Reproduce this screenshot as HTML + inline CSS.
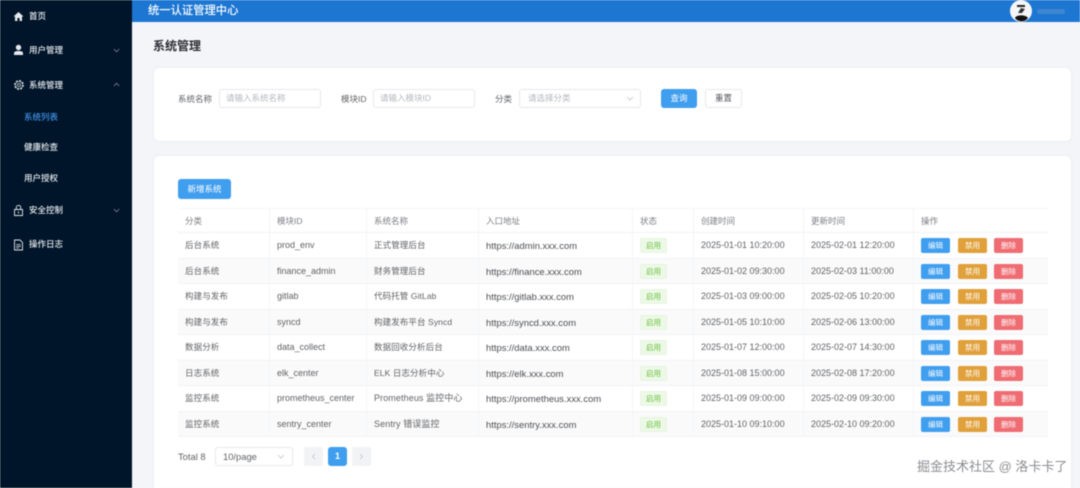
<!DOCTYPE html>
<html lang="zh">
<head>
<meta charset="utf-8">
<title>系统管理</title>
<style>
*{box-sizing:border-box}
html,body{margin:0;padding:0}
body{width:1080px;height:488px;overflow:hidden;background:#f3f5f8;font-family:"Liberation Sans","Noto Sans CJK SC",sans-serif;color:#606266;position:relative;font-size:8.5px}
#root{position:absolute;left:0;top:0;width:1080px;height:488px;overflow:hidden;filter:blur(.4px)}
.a{position:absolute;white-space:nowrap}
.side{position:absolute;left:0;top:0;width:132px;height:488px;background:#001529}
.m{position:absolute;color:#e6e9ee;font-size:8.5px;line-height:12px;white-space:nowrap;font-weight:500}
.side svg{position:absolute}
.top{position:absolute;left:132px;top:0;width:948px;height:22px;background:#1c76d2}
.card{position:absolute;left:153px;width:919px;background:#fff;border:1px solid #eceef2;border-radius:6px}
.inp{position:absolute;background:#fff;border:1px solid #e6e8ec;border-radius:3px;height:19px;line-height:17px;padding-left:6px;color:#b4b8bf;font-size:8.5px}
.btn{position:absolute;border-radius:3px;text-align:center;color:#fff;font-size:8.5px}
.r{position:absolute;left:178px;width:870px;border-bottom:1px solid #f2f3f6}
.r.s{background:#fafafa}
.c{position:absolute;top:0;white-space:nowrap;color:#606266;font-size:9px;line-height:25px}
.c.z{font-size:8.5px;letter-spacing:.1px}
.c.h{font-size:8.5px;color:#7b7e84;line-height:24px}
.c.u{color:#4a4d52;font-size:9.4px;letter-spacing:.02px}
.tag{position:absolute;left:462px;top:5px;width:27px;height:15px;background:#eef8e8;border:1px solid #e7f5df;border-radius:2px;color:#67c23a;font-size:7.5px;line-height:13px;text-align:center}
.b{position:absolute;top:5px;width:29px;height:15px;border-radius:2px;color:#fff;font-size:7.5px;line-height:15px;text-align:center}
.b1{left:743px;background:#409eef}.b2{left:780px;background:#e0a03a}.b3{left:816px;background:#ee6c72}
.v{position:absolute;top:208px;width:1px;height:229px;background:#f4f5f7}
</style>
</head>
<body>
<div id="root">
<div class="side">
  <svg style="left:13px;top:11px" width="11" height="11" viewBox="0 0 11 11"><path d="M5.500 1 10.500 5.500 9 5.500 9 10 6.600 10 6.600 7 4.400 7 4.400 10 2 10 2 5.500 .5 5.500Z" fill="#e6e9ee"/></svg>
  <div class="m" style="left:29px;top:10px">首页</div>
  <svg style="left:13px;top:44px" width="11" height="12" viewBox="0 0 11 12"><circle cx="5.500" cy="3.500" r="2.700" fill="#e6e9ee"/><path d="M1 11V9.200C1 7.600 3 7 5.500 7S10 7.600 10 9.200V11Z" fill="#e6e9ee"/></svg>
  <div class="m" style="left:29px;top:44px">用户管理</div>
  <svg style="left:113px;top:48px" width="7" height="5" viewBox="0 0 7 5"><path d="M.8 1 3.500 3.800 6.200 1" fill="none" stroke="#7d8794" stroke-width=".8"/></svg>
  <svg style="left:13px;top:79px" width="12" height="12" viewBox="0 0 12 12"><circle cx="6" cy="6" r="4.200" fill="none" stroke="#d5d9de" stroke-width="1.500" stroke-dasharray="1.900 1.400"/><circle cx="6" cy="6" r="3.500" fill="none" stroke="#d5d9de" stroke-width=".6"/><circle cx="6" cy="6" r="1.500" fill="none" stroke="#d5d9de" stroke-width=".8"/></svg>
  <div class="m" style="left:29px;top:79px">系统管理</div>
  <svg style="left:113px;top:82px" width="7" height="5" viewBox="0 0 7 5"><path d="M.8 4 3.500 1.200 6.200 4" fill="none" stroke="#7d8794" stroke-width=".8"/></svg>
  <div class="m" style="left:24px;top:111px;color:#3f8fe6">系统列表</div>
  <div class="m" style="left:24px;top:141px">健康检查</div>
  <div class="m" style="left:24px;top:172px">用户授权</div>
  <svg style="left:13px;top:204px" width="11" height="13" viewBox="0 0 11 13"><path d="M1.500 5.500H9.500V11.500H1.500Z" fill="none" stroke="#e0e3e8" stroke-width=".9"/><path d="M3.300 5.500V3.400C3.300 .8 7.700 .8 7.700 3.400V5.500" fill="none" stroke="#e0e3e8" stroke-width=".9"/><path d="M5.500 7.500V9.500" stroke="#e0e3e8" stroke-width=".9"/></svg>
  <div class="m" style="left:29px;top:204px">安全控制</div>
  <svg style="left:113px;top:208px" width="7" height="5" viewBox="0 0 7 5"><path d="M.8 1 3.500 3.800 6.200 1" fill="none" stroke="#7d8794" stroke-width=".8"/></svg>
  <svg style="left:13px;top:239px" width="11" height="12" viewBox="0 0 11 12"><path d="M1.500 1H7L9.500 3.500V11H1.500Z" fill="none" stroke="#e0e3e8" stroke-width=".9"/><path d="M3.200 5.500H7.800M3.200 7.300H7.800M3.200 9H6" stroke="#e0e3e8" stroke-width=".8"/></svg>
  <div class="m" style="left:29px;top:238px">操作日志</div>
</div>

<div class="top">
  <div class="a" style="left:16px;top:3px;color:#fff;font-size:11.300px;line-height:16px;font-weight:500">统一认证管理中心</div>
  <svg style="position:absolute;left:878px;top:0" width="22" height="22" viewBox="0 0 22 22">
    <circle cx="11" cy="11" r="11" fill="#f4f6f8"/>
    <path d="M5 18C6 14.500 16 14.500 18 18C15 22.500 8 22.500 5 18Z" fill="#111"/>
    <path d="M8 13 11 8 15 9 12 13Z" fill="#333"/>
    <path d="M7 5 15 5 15 7 7 7Z" fill="#222"/>
  </svg>
  <div class="a" style="left:905px;top:9px;width:28px;height:5px;background:#3f86cf;border-radius:2px"></div>
</div>

<div class="a" style="left:153px;top:37px;color:#2a2d33;font-size:12px;line-height:18px;font-weight:700">系统管理</div>

<div class="card" style="top:67px;height:75px"></div>
<div class="a" style="left:178px;top:93px;line-height:12px">系统名称</div>
<div class="inp" style="left:219px;top:89px;width:102px">请输入系统名称</div>
<div class="a" style="left:341px;top:93px;line-height:12px">模块ID</div>
<div class="inp" style="left:373px;top:89px;width:102px">请输入模块ID</div>
<div class="a" style="left:495px;top:93px;line-height:12px">分类</div>
<div class="inp" style="left:519px;top:89px;width:122px;padding-left:8px">请选择分类
  <svg style="position:absolute;left:106px;top:6px" width="8" height="5" viewBox="0 0 8 5"><path d="M1 1 4 4 7 1" fill="none" stroke="#c0c4cc" stroke-width=".8"/></svg>
</div>
<div class="btn" style="left:661px;top:89px;width:36px;height:19px;line-height:19px;background:#409eef">查询</div>
<div class="btn" style="left:705px;top:89px;width:37px;height:19px;line-height:17px;background:#fff;border:1px solid #e6e8ec;color:#55585e">重置</div>

<div class="card" style="top:155px;height:345px"></div>
<div class="btn" style="left:178px;top:179px;width:53px;height:20px;line-height:20px;background:#409eef">新增系统</div>

<div class="r" style="top:208px;height:25px;border-top:1px solid #f5f6f8">
  <div class="c h" style="left:7px">分类</div><div class="c h" style="left:99px">模块ID</div><div class="c h" style="left:196px">系统名称</div><div class="c h" style="left:308px">入口地址</div><div class="c h" style="left:462px">状态</div><div class="c h" style="left:523px">创建时间</div><div class="c h" style="left:633px">更新时间</div><div class="c h" style="left:743px">操作</div>
</div>

<div class="r" style="top:233px;height:26px">
  <div class="c z" style="left:7px">后台系统</div><div class="c" style="left:99px">prod_env</div><div class="c z" style="left:196px">正式管理后台</div><div class="c u" style="left:308px">https://admin.xxx.com</div><div class="tag">启用</div><div class="c" style="left:523px">2025-01-01 10:20:00</div><div class="c" style="left:633px">2025-02-01 12:20:00</div><div class="b b1">编辑</div><div class="b b2">禁用</div><div class="b b3">删除</div>
</div>
<div class="r s" style="top:259px;height:25px">
  <div class="c z" style="left:7px">后台系统</div><div class="c" style="left:99px">finance_admin</div><div class="c z" style="left:196px">财务管理后台</div><div class="c u" style="left:308px">https://finance.xxx.com</div><div class="tag">启用</div><div class="c" style="left:523px">2025-01-02 09:30:00</div><div class="c" style="left:633px">2025-02-03 11:00:00</div><div class="b b1">编辑</div><div class="b b2">禁用</div><div class="b b3">删除</div>
</div>
<div class="r" style="top:284px;height:26px">
  <div class="c z" style="left:7px">构建与发布</div><div class="c" style="left:99px">gitlab</div><div class="c z" style="left:196px">代码托管 GitLab</div><div class="c u" style="left:308px">https://gitlab.xxx.com</div><div class="tag">启用</div><div class="c" style="left:523px">2025-01-03 09:00:00</div><div class="c" style="left:633px">2025-02-05 10:20:00</div><div class="b b1">编辑</div><div class="b b2">禁用</div><div class="b b3">删除</div>
</div>
<div class="r s" style="top:310px;height:25px">
  <div class="c z" style="left:7px">构建与发布</div><div class="c" style="left:99px">syncd</div><div class="c z" style="left:196px">构建发布平台 Syncd</div><div class="c u" style="left:308px">https://syncd.xxx.com</div><div class="tag">启用</div><div class="c" style="left:523px">2025-01-05 10:10:00</div><div class="c" style="left:633px">2025-02-06 13:00:00</div><div class="b b1">编辑</div><div class="b b2">禁用</div><div class="b b3">删除</div>
</div>
<div class="r" style="top:335px;height:26px">
  <div class="c z" style="left:7px">数据分析</div><div class="c" style="left:99px">data_collect</div><div class="c z" style="left:196px">数据回收分析后台</div><div class="c u" style="left:308px">https://data.xxx.com</div><div class="tag">启用</div><div class="c" style="left:523px">2025-01-07 12:00:00</div><div class="c" style="left:633px">2025-02-07 14:30:00</div><div class="b b1">编辑</div><div class="b b2">禁用</div><div class="b b3">删除</div>
</div>
<div class="r s" style="top:361px;height:25px">
  <div class="c z" style="left:7px">日志系统</div><div class="c" style="left:99px">elk_center</div><div class="c z" style="left:196px">ELK 日志分析中心</div><div class="c u" style="left:308px">https://elk.xxx.com</div><div class="tag">启用</div><div class="c" style="left:523px">2025-01-08 15:00:00</div><div class="c" style="left:633px">2025-02-08 17:20:00</div><div class="b b1">编辑</div><div class="b b2">禁用</div><div class="b b3">删除</div>
</div>
<div class="r" style="top:386px;height:26px">
  <div class="c z" style="left:7px">监控系统</div><div class="c" style="left:99px">prometheus_center</div><div class="c z" style="left:196px;font-size:9px">Prometheus 监控中心</div><div class="c u" style="left:308px">https://prometheus.xxx.com</div><div class="tag">启用</div><div class="c" style="left:523px">2025-01-09 09:00:00</div><div class="c" style="left:633px">2025-02-09 09:30:00</div><div class="b b1">编辑</div><div class="b b2">禁用</div><div class="b b3">删除</div>
</div>
<div class="r s" style="top:412px;height:25px">
  <div class="c z" style="left:7px">监控系统</div><div class="c" style="left:99px">sentry_center</div><div class="c z" style="left:196px;font-size:9px">Sentry 错误监控</div><div class="c u" style="left:308px">https://sentry.xxx.com</div><div class="tag">启用</div><div class="c" style="left:523px">2025-01-10 09:10:00</div><div class="c" style="left:633px">2025-02-10 09:20:00</div><div class="b b1">编辑</div><div class="b b2">禁用</div><div class="b b3">删除</div>
</div>

<div class="v" style="left:269px"></div><div class="v" style="left:366px"></div><div class="v" style="left:478px"></div><div class="v" style="left:632px"></div><div class="v" style="left:693px"></div><div class="v" style="left:803px"></div><div class="v" style="left:913px"></div>

<div class="a" style="left:178px;top:450px;font-size:9.400px;line-height:13px">Total 8</div>
<div class="inp" style="left:215px;top:447px;width:78px;color:#606266;font-size:9.400px;padding-left:7px">10/page
  <svg style="position:absolute;left:61px;top:6px" width="8" height="5" viewBox="0 0 8 5"><path d="M1 1 4 4 7 1" fill="none" stroke="#c0c4cc" stroke-width=".8"/></svg>
</div>
<div class="a" style="left:304px;top:447px;width:19px;height:19px;background:#f2f3f5;border-radius:2px"><svg style="position:absolute;left:7px;top:6px" width="5" height="7" viewBox="0 0 5 7"><path d="M4 1 1.500 3.500 4 6" fill="none" stroke="#c0c4cc" stroke-width=".8"/></svg></div>
<div class="btn" style="left:328px;top:447px;width:19px;height:19px;line-height:19px;background:#409eef;font-size:9px;font-weight:700">1</div>
<div class="a" style="left:352px;top:447px;width:19px;height:19px;background:#f2f3f5;border-radius:2px"><svg style="position:absolute;left:7px;top:6px" width="5" height="7" viewBox="0 0 5 7"><path d="M1 1 3.500 3.500 1 6" fill="none" stroke="#c0c4cc" stroke-width=".8"/></svg></div>

<div class="a" style="left:917px;top:458px;color:#8b8d91;font-size:13px;line-height:18px">掘金技术社区 @ 洛卡卡了</div>
</div>
</body>
</html>
